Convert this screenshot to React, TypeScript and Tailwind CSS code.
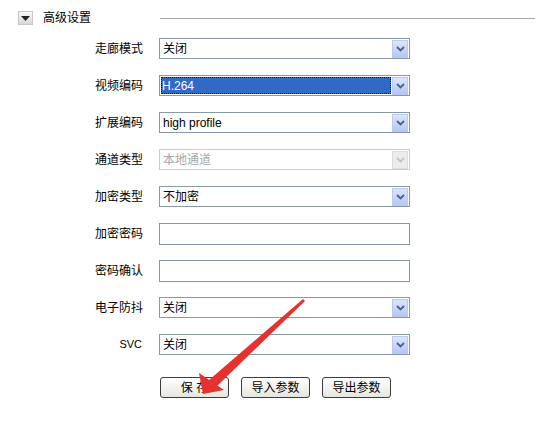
import React from 'react';

const font = { fontFamily: '"Liberation Sans", "Noto Sans CJK SC", sans-serif' };

const DropBtn = ({ disabled }: { disabled?: boolean }) => (
  <div
    className={`w-[16px] h-[18px] mr-[1px] flex items-center justify-center border ${
      disabled ? 'border-[#dcdcdc] bg-[#ececec]' : 'border-[#b9c9ef] bg-gradient-to-b from-[#dbe5fc] to-[#b5c8f4]'
    }`}
  >
    <svg width="9" height="6" viewBox="0 0 9 6">
      <path d="M1 1 L4.5 4.5 L8 1" fill="none" stroke={disabled ? '#c4c4c4' : '#4d6185'} strokeWidth="1.8" />
    </svg>
  </div>
);

const Select = ({ value, selected, disabled }: { value: string; selected?: boolean; disabled?: boolean }) => (
  <div
    className={`w-[251px] h-[21px] flex items-center border bg-white ${
      disabled ? 'border-[#c7cdd3]' : 'border-[#8a97a6]'
    }`}
  >
    <div className="flex-1 h-full p-[1px] flex items-center">
      {selected ? (
        <div className="w-full h-full bg-[#316ac5] text-white outline outline-1 outline-dotted outline-[#111] -outline-offset-1 flex items-center pl-[1px] text-[12px]">
          {value}
        </div>
      ) : (
        <span className={`pl-[2px] text-[12px] ${disabled ? 'text-[#a8a8a8]' : 'text-black'}`}>{value}</span>
      )}
    </div>
    <DropBtn disabled={disabled} />
  </div>
);

const TextBox = () => <div className="w-[251px] h-[22px] border border-[#8a97a6] bg-white" />;

const rows: { label: string; kind: 'select' | 'text'; value?: string; selected?: boolean; disabled?: boolean }[] = [
  { label: '走廊模式', kind: 'select', value: '关闭' },
  { label: '视频编码', kind: 'select', value: 'H.264', selected: true },
  { label: '扩展编码', kind: 'select', value: 'high profile' },
  { label: '通道类型', kind: 'select', value: '本地通道', disabled: true },
  { label: '加密类型', kind: 'select', value: '不加密' },
  { label: '加密密码', kind: 'text' },
  { label: '密码确认', kind: 'text' },
  { label: '电子防抖', kind: 'select', value: '关闭' },
  { label: 'SVC', kind: 'select', value: '关闭' },
];

const Button = ({ children }: { children: React.ReactNode }) => (
  <button className="w-[69px] h-[21px] rounded-[3px] border border-[#3c3c3c] bg-gradient-to-b from-white to-[#e6e6e0] text-[12px] text-black leading-none">
    {children}
  </button>
);

export default function App() {
  return (
    <div className="relative w-[535px] h-[442px] bg-white overflow-hidden text-[#222]" style={font}>
      {/* header */}
      <div className="flex items-center h-[38px] pb-[2px]">
        <div className="ml-[18px] w-[15px] h-[14px] border border-[#c8c8c8] bg-gradient-to-b from-[#fafafa] to-[#d8d8d8] flex items-center justify-center">
          <svg width="9" height="5" viewBox="0 0 9 5">
            <path d="M0 0 H9 L4.5 5 Z" fill="#222" />
          </svg>
        </div>
        <span className="ml-[10px] text-[12px] text-black">高级设置</span>
        <div className="ml-[69px] flex-1 h-px bg-[#a9a9a9]" />
      </div>

      {/* form */}
      <div className="flex flex-col gap-[16px]">
        {rows.map((r) => (
          <div key={r.label} className="flex items-center h-[21px]">
            <div className={`w-[143px] text-right text-black ${r.label === 'SVC' ? 'text-[11px] pr-[1px]' : 'text-[12px]'}`}>
              {r.label}
            </div>
            <div className="ml-[16px]">
              {r.kind === 'select' ? (
                <Select value={r.value!} selected={r.selected} disabled={r.disabled} />
              ) : (
                <TextBox />
              )}
            </div>
          </div>
        ))}
      </div>

      <div className="flex gap-[12px] ml-[160px] mt-[22px]">
        <Button>保&nbsp;存</Button>
        <Button>导入参数</Button>
        <Button>导出参数</Button>
      </div>

      {/* red annotation arrow */}
      <svg className="absolute left-0 top-0 pointer-events-none" width="535" height="442" viewBox="0 0 535 442">
        <path d="M303 299 L305 301 L216 387 L209 380 Z" fill="#e5322e" />
        <path d="M203 394 L199 373 L224 390 Z" fill="#e5322e" />
      </svg>
    </div>
  );
}
